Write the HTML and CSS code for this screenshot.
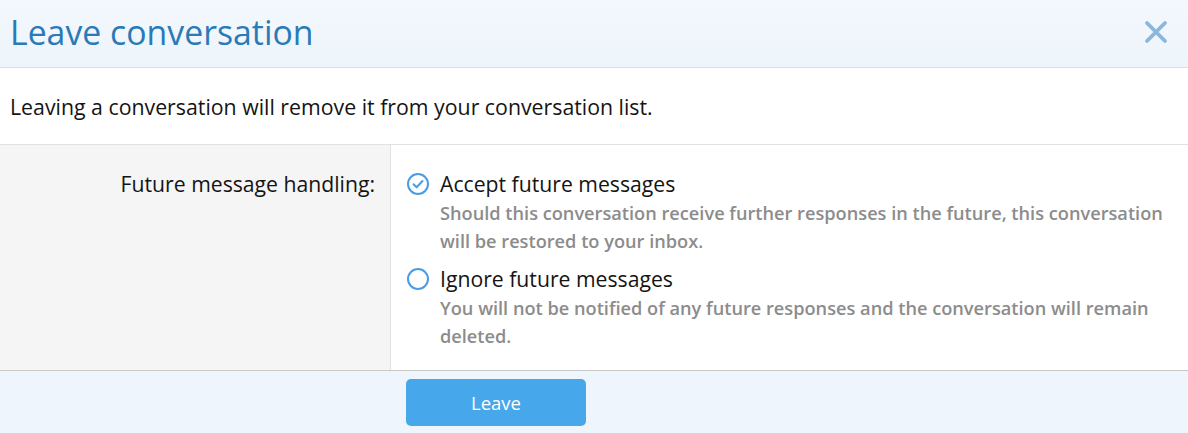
FILE: index.html
```html
<!DOCTYPE html>
<html lang="en">
<head>
    <meta charset="UTF-8">
    <title>Leave conversation</title>
    <link rel="stylesheet" href="styles.css">
</head>
<body>
    <div class="overlay">
        <div class="overlay-title">
            <span>Leave conversation</span>
            <a class="overlay-close" title="Close">
                <svg width="24" height="24" viewBox="0 0 24 24"><path d="M3 3 L21 21 M21 3 L3 21" stroke="#8ab7db" stroke-width="3.8" stroke-linecap="round"/></svg>
            </a>
        </div>
        <div class="block-row">Leaving a conversation will remove it from your conversation list.</div>
        <dl class="form-row">
            <dt>Future message handling:</dt>
            <dd>
                <ul class="choices">
                    <li>
                        <span class="radio checked">
                            <svg width="24" height="24" viewBox="0 0 24 24"><circle cx="12" cy="12" r="10" fill="none" stroke="#4a9de2" stroke-width="2"/><path d="M7.5 12.3 L10.6 15.3 L16.5 9" fill="none" stroke="#4a9de2" stroke-width="2" stroke-linecap="round" stroke-linejoin="round"/></svg>
                        </span>
                        <div class="choice-text">
                            <div class="choice-label">Accept future messages</div>
                            <div class="hint">Should this conversation receive further responses in the future, this conversation will be restored to your inbox.</div>
                        </div>
                    </li>
                    <li>
                        <span class="radio">
                            <svg width="24" height="24" viewBox="0 0 24 24"><circle cx="12" cy="12" r="10" fill="none" stroke="#4a9de2" stroke-width="2"/></svg>
                        </span>
                        <div class="choice-text">
                            <div class="choice-label">Ignore future messages</div>
                            <div class="hint">You will not be notified of any future responses and the conversation will remain deleted.</div>
                        </div>
                    </li>
                </ul>
            </dd>
        </dl>
        <div class="form-submit">
            <button class="button-primary">Leave</button>
        </div>
    </div>
</body>
</html>
```

FILE: styles.css
```css
* {
    margin: 0;
    padding: 0;
    box-sizing: border-box;
    font-family: "Open Sans", Arial, sans-serif;
}
body {
    background-color: #fff;
    color: #141414;
}
.overlay {
    width: 1188px;
    height: 433px;
    display: flex;
    flex-direction: column;
}
.overlay-title {
    height: 68px;
    display: flex;
    align-items: center;
    justify-content: space-between;
    padding: 0 10px 3px 10px;
    background: linear-gradient(#f3f8fd, #edf4fb);
    border-bottom: 1px solid #d8dfe6;
    color: #2a7ab8;
    font-size: 33.8px;
}
.overlay-close {
    display: flex;
    margin-right: 10px;
    cursor: pointer;
}
.block-row {
    height: 77px;
    display: flex;
    align-items: center;
    padding: 0 10px;
    font-size: 21.3px;
    border-bottom: 1px solid #e1e1e1;
}
.form-row {
    display: flex;
    flex: 1;
    border-bottom: 1px solid #c9c9c9;
}
.form-row dt {
    width: 391px;
    background: #f5f5f5;
    border-right: 1px solid #e1e1e1;
    text-align: right;
    padding: 24px 15px 0 0;
    font-size: 21.2px;
    line-height: 30px;
}
.form-row dd {
    flex: 1;
    padding: 24px 15px 20px 15px;
}
.choices {
    list-style: none;
    display: flex;
    flex-direction: column;
    gap: 9px;
}
.choices li {
    display: flex;
    gap: 10px;
}
.radio {
    display: flex;
    height: 30px;
    align-items: center;
}
.choice-label {
    font-size: 21.2px;
    line-height: 30px;
}
.hint {
    font-size: 18.2px;
    line-height: 28px;
    font-weight: 600;
    color: #8c8c8c;
}
.form-submit {
    flex: 1;
    background: #eef5fc;
    padding: 8px 0 0 406px;
}
.button-primary {
    width: 180px;
    height: 47px;
    border: none;
    border-radius: 5px;
    background: #47a7eb;
    color: #fff;
    font-size: 18.5px;
    cursor: pointer;
}
```
